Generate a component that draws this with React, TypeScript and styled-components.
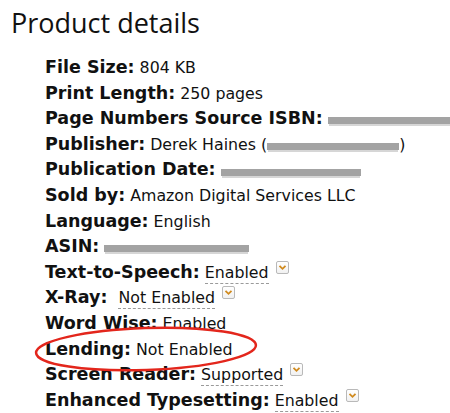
import React from 'react';
import styled, { createGlobalStyle } from 'styled-components';

const GlobalStyle = createGlobalStyle`
  html, body {
    margin: 0;
    padding: 0;
    background: #fff;
  }
`;

const Page = styled.div`
  position: relative;
  width: 450px;
  height: 413px;
  overflow: hidden;
  padding: 6px 0 0 11px;
  box-sizing: border-box;
`;

const Title = styled.h1`
  margin: 0 0 17px;
  font-family: 'Open Sans', Arial, sans-serif;
  font-weight: 400;
  font-size: 27px;
  line-height: 34px;
  color: #111;
`;

const List = styled.ul`
  list-style: none;
  margin: 0;
  padding: 0 0 0 34px;
`;

const Row = styled.li`
  display: flex;
  align-items: baseline;
  height: 25.6px;
  font-family: 'DejaVu Sans', Verdana, sans-serif;
  font-size: 15.8px;
  color: #111;
  white-space: nowrap;
`;

const Label = styled.b<{ $gap?: number }>`
  font-weight: 700;
  font-size: 17.5px;
  margin-right: ${p => p.$gap ?? 5}px;
`;

const Value = styled.span<{ $dotted?: boolean }>`
  ${p => p.$dotted && 'border-bottom: 1px dashed #9a9a9a; padding-bottom: 1px;'}
`;

const Redacted = styled.span<{ $w: number }>`
  display: inline-block;
  flex: none;
  width: ${p => p.$w}px;
  height: 7px;
  background: #a3a3a3;
  box-shadow: 0 3px 0 -1px #d6d6d6;
  align-self: center;
`;

const Popover = styled.span`
  position: relative;
  top: -7px;
  display: inline-flex;
  align-items: center;
  justify-content: center;
  width: 13px;
  height: 13px;
  margin-left: 7px;
  border: 1px solid #b9b9b9;
  border-radius: 2px;
  background: linear-gradient(#fff, #f1f1f1);
  box-sizing: border-box;
`;

const Ring = styled.svg`
  position: absolute;
  left: 0;
  top: 0;
  pointer-events: none;
`;

const Chevron = () => (
  <Popover>
    <svg width="9" height="7" viewBox="0 0 9 7">
      <path d="M1.5 1.8 L4.5 4.8 L7.5 1.8" fill="none" stroke="#d08a1e" strokeWidth="1.8" />
    </svg>
  </Popover>
);

export default function App() {
  return (
    <Page>
      <GlobalStyle />
      <Title>Product details</Title>
      <List>
        <Row><Label>File Size:</Label><Value>804 KB</Value></Row>
        <Row><Label>Print Length:</Label><Value>250 pages</Value></Row>
        <Row><Label>Page Numbers Source ISBN:</Label><Redacted $w={130} /></Row>
        <Row>
          <Label>Publisher:</Label><Value>Derek Haines (</Value><Redacted $w={132} /><Value>)</Value>
        </Row>
        <Row><Label>Publication Date:</Label><Redacted $w={140} /></Row>
        <Row><Label>Sold by:</Label><Value>Amazon Digital Services LLC</Value></Row>
        <Row><Label>Language:</Label><Value>English</Value></Row>
        <Row><Label>ASIN:</Label><Redacted $w={145} /></Row>
        <Row><Label>Text-to-Speech:</Label><Value $dotted>Enabled</Value><Chevron /></Row>
        <Row><Label $gap={11}>X-Ray:</Label><Value $dotted>Not Enabled</Value><Chevron /></Row>
        <Row><Label>Word Wise:</Label><Value>Enabled</Value></Row>
        <Row><Label>Lending:</Label><Value>Not Enabled</Value></Row>
        <Row><Label>Screen Reader:</Label><Value $dotted>Supported</Value><Chevron /></Row>
        <Row><Label>Enhanced Typesetting:</Label><Value $dotted>Enabled</Value><Chevron /></Row>
      </List>
      <Ring width="450" height="413">
        <ellipse cx="146" cy="349" rx="110" ry="21" fill="none" stroke="#e3261c" strokeWidth="2.5" transform="rotate(-2 146 349)" />
      </Ring>
    </Page>
  );
}
